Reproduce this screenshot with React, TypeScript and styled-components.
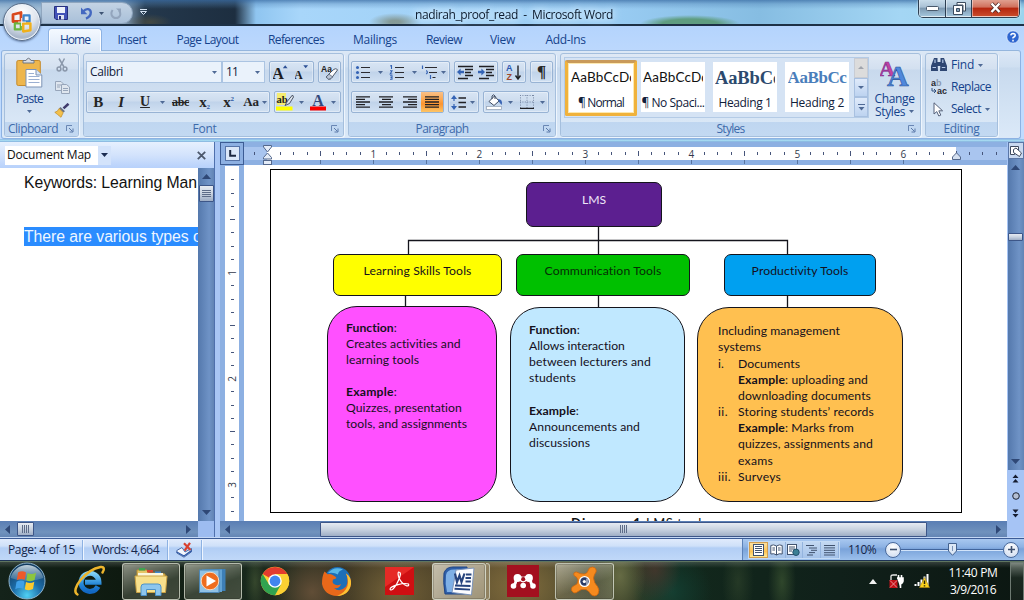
import React, { ReactNode, useLayoutEffect, useRef } from 'react';
import styled, { createGlobalStyle, css } from 'styled-components';

const Global = createGlobalStyle`
  *, *::before, *::after { box-sizing: border-box; }
  html, body { margin: 0; padding: 0; }
  body { width: 1024px; height: 600px; overflow: hidden; font-family: "Open Sans", "Noto Sans", sans-serif; font-size: 12px; color: #15428b; }
  svg { display: block; flex: none; }
`;

/* ---------- text fitted to a set advance width ---------- */

const Run = styled.span<{ $size?: number; $color?: string; $bold?: boolean; $font?: string; $lh?: number }>`
  display: inline-block;
  flex: none;
  white-space: pre;
  line-height: ${p => p.$lh ?? 16}px;
  ${p => p.$size && css`font-size: ${p.$size}px;`}
  ${p => p.$color && css`color: ${p.$color};`}
  ${p => p.$bold && css`font-weight: 700;`}
  ${p => p.$font && css`font-family: ${p.$font};`}
`;

type TextProps = { w: number; children: ReactNode; size?: number; color?: string; bold?: boolean; font?: string; lh?: number };

function Text({ w, children, size, color, bold, font, lh }: TextProps) {
  const ref = useRef<HTMLSpanElement>(null);
  useLayoutEffect(() => {
    const el = ref.current;
    if (!el) return;
    el.style.letterSpacing = '0px';
    const count = (el.textContent || '').length;
    const natural = el.getBoundingClientRect().width;
    el.style.letterSpacing = `${(w - natural) / count}px`;
  }, [w]);
  return <Run ref={ref} $size={size} $color={color} $bold={bold} $font={font} $lh={lh}>{children}</Run>;
}

const LATO = 'Lato, sans-serif';
const ARIAL = '"Liberation Sans", sans-serif';
const SERIF = '"Liberation Serif", serif';

/* ---------- window frame ---------- */

const Screen = styled.div`
  width: 1024px;
  height: 600px;
  display: flex;
  flex-direction: column;
  overflow: hidden;
  position: relative;
  background: #bfdbff;
`;

const TitleBar = styled.header`
  height: 26px;
  flex: none;
  display: flex;
  border-bottom: 2px solid #1d3146;
  background:
    linear-gradient(180deg, rgba(60,110,165,.75) 0, rgba(80,130,180,.35) 4px, transparent 9px),
    radial-gradient(ellipse 50px 9px at 690px 24px, #5f9d80 55%, transparent 100%),
    radial-gradient(ellipse 26px 9px at 395px 22px, rgba(120,130,110,.7) 20%, transparent 100%),
    radial-gradient(ellipse 22px 8px at 150px 22px, rgba(90,85,60,.6), transparent),
    linear-gradient(90deg, #a3bfd8 0, #9ab4cc 120px, #24384c 145px, #1d2e40 235px, #8fc5f0 256px, #a8d6fa 300px, #98cbf2 620px, #86bde2 760px, #a4d6f4 900px, #9bd4ee 1024px);
`;

const QuickAccess = styled.div`
  display: flex;
  align-items: center;
  gap: 6px;
  width: 92px;
  height: 22px;
  margin: 2px 0 0 41px;
  padding-left: 12px;
  border: 1px solid #8fa6bf;
  border-radius: 0 11px 11px 0;
  background: linear-gradient(#c3d3e4, #a9c0d9);
`;

const TitleLeft = styled.div`
  display: flex;
  align-items: center;
  gap: 7px;
  flex: 0 0 415px;
`;

const TitleText = styled.div`
  flex: 1;
  padding-top: 6px;
  filter: drop-shadow(0 0 4px #d9efff) drop-shadow(0 0 3px #d9efff);
`;

const WindowButtons = styled.div`
  display: flex;
  width: 102px;
  height: 18px;
  margin-right: 4px;
  border: 1px solid #2d3f52;
  border-top: 0;
  border-radius: 0 0 5px 5px;
  overflow: hidden;
  box-shadow: 0 0 2px #e4f6ff;
`;

const WindowButton = styled.div<{ $w: number; $close?: boolean }>`
  width: ${p => p.$w}px;
  display: flex;
  align-items: center;
  justify-content: center;
  border: 1px solid rgba(255,255,255,.45);
  border-top: 0;
  background: ${p => p.$close
    ? 'linear-gradient(#e0a090 0, #d0705c 45%, #b5250e 50%, #c84a2a 100%)'
    : 'linear-gradient(#c8dcea 0, #a8c0d4 45%, #7c98b0 50%, #a2c4da 100%)'};
  & + & { box-shadow: -1px 0 0 #2d3f52; }
`;

const OfficeButton = styled.div`
  position: absolute;
  left: 3px;
  top: 3px;
  z-index: 5;
  width: 38px;
  height: 38px;
  border-radius: 50%;
  border: 1px solid #5b6f8a;
  display: flex;
  align-items: center;
  justify-content: center;
  background: radial-gradient(circle at 50% 25%, #ffffff 0, #dfe5ee 45%, #a9b7cb 75%, #eef3fa 100%);
  box-shadow: inset 0 0 0 1px #eef4fb, 0 1px 2px rgba(20,40,80,.5);
`;

/* ---------- ribbon ---------- */

const TabRow = styled.nav`
  height: 24px;
  flex: none;
  display: flex;
  align-items: flex-end;
  padding-left: 48px;
  background: linear-gradient(#b4d4fd, #bcd8fd);
`;

const Tab = styled.div<{ $w: number; $active?: boolean }>`
  width: ${p => p.$w}px;
  height: 23px;
  padding-top: 4px;
  text-align: center;
  ${p => p.$active && css`
    position: relative;
    padding-top: 2px;
    margin-bottom: -1px;
    border: 1px solid #8db2e3;
    border-bottom: 0;
    border-radius: 4px 4px 0 0;
    background: linear-gradient(#f4f9ff, #e6effb 60%, #dbe7f6);
    box-shadow: inset 1px 0 0 #fff, inset -1px 0 0 #fff;
  `}
`;

const HelpSlot = styled.div`
  margin-left: auto;
  padding: 0 4px 6px 0;
`;

const Ribbon = styled.section`
  height: 89px;
  flex: none;
  display: flex;
  gap: 4px;
  margin: 0 3px 0 1px;
  padding: 2px 3px 2px 2px;
  border: 1px solid #8db2e3;
  border-top-color: #95b6dd;
  border-radius: 3px;
  background: linear-gradient(#dce8f6 0, #cfdff1 16px, #c8daee 17px, #dbe9f8 100%);
`;

const RibbonEdge = styled.div`
  height: 3px;
  flex: none;
  background: linear-gradient(#8db9e4, #a9dff3 60%, #7ba4d8);
`;

const GroupBox = styled.div<{ $w: number }>`
  width: ${p => p.$w}px;
  height: 84px;
  flex: none;
  display: flex;
  flex-direction: column;
  border: 1px solid #a5bfdd;
  border-radius: 3px;
  overflow: hidden;
  background: linear-gradient(#dfe9f5 0, #d3e0f0 15px, #c8d9ed 16px, #d9e7f6 68px);
  box-shadow: 1px 1px 0 #eef5fd;
`;

const GroupBody = styled.div`
  height: 68px;
  display: flex;
  overflow: hidden;
`;

const GroupLabel = styled.div`
  height: 14px;
  position: relative;
  display: flex;
  justify-content: center;
  align-items: center;
  background: linear-gradient(#bfd6f0, #c3d9f2);
  color: #3e6aaa;
`;

const LabelSpacer = styled.div<{ $w: number }>`width: ${p => p.$w}px; flex: none;`;

function Launcher() {
  return (
    <svg width="8" height="8" viewBox="0 0 8 8">
      <path d="M0.5 6V0.5H6" fill="none" stroke="#6a87b4" />
      <path d="M3 3l3.5 3.5M7 3.5V7H3.5" fill="none" stroke="#5b79a8" />
    </svg>
  );
}

const LauncherSlot = styled.div`
  position: absolute;
  right: 4px;
  top: 3px;
`;

function Group({ w, label, lw, shift = 0, launcher = true, children }: { w: number; label: string; lw: number; shift?: number; launcher?: boolean; children: ReactNode }) {
  return (
    <GroupBox $w={w}>
      <GroupBody>{children}</GroupBody>
      <GroupLabel>
        <Text w={lw} lh={14}>{label}</Text>
        {shift > 0 && <LabelSpacer $w={shift} />}
        {launcher && <LauncherSlot><Launcher /></LauncherSlot>}
      </GroupLabel>
    </GroupBox>
  );
}

const Rows = styled.div`
  display: flex;
  flex-direction: column;
  gap: 8px;
  padding: 7px 0 0 2px;
`;

const Row = styled.div<{ $gap?: number }>`
  display: flex;
  height: 22px;
  gap: ${p => p.$gap ?? 4}px;
`;

const Cluster = styled.div<{ $w: number }>`
  width: ${p => p.$w}px;
  height: 22px;
  display: flex;
  align-items: center;
  border: 1px solid #98b3d4;
  border-radius: 2px;
  background: linear-gradient(#d8e5f4 0, #cddcee 45%, #c0d3ea 50%, #d0e0f2 100%);
  box-shadow: inset 0 0 0 1px rgba(255,255,255,.35);
`;

const Tool = styled.div<{ $w: number; $on?: boolean }>`
  width: ${p => p.$w}px;
  height: 20px;
  flex: none;
  display: flex;
  align-items: center;
  justify-content: center;
  color: #222;
  ${p => p.$on && css`background: linear-gradient(#f8c088, #fda64b 40%, #fb9430 60%, #fdc566);`}
`;

const Combo = styled.div<{ $w: number }>`
  width: ${p => p.$w}px;
  height: 22px;
  display: flex;
  align-items: center;
  justify-content: space-between;
  padding: 0 4px 0 3px;
  border: 1px solid #abc4e2;
  background: #eaf2fb;
  color: #10203a;
`;

const Arrow = ({ c = '#4f6a96', s = 5 }: { c?: string; s?: number }) => (
  <svg width={s} height="3" viewBox="0 0 5 3"><path d="M0 0H5L2.5 3Z" fill={c} /></svg>
);

const Glyph = styled.span<{ $size: number; $italic?: boolean; $under?: boolean; $strike?: boolean; $c?: string }>`
  font: ${p => (p.$italic ? 'italic ' : '')}700 ${p => p.$size}px/18px "Liberation Serif", serif;
  text-decoration: ${p => (p.$under ? 'underline' : p.$strike ? 'line-through' : 'none')};
  color: ${p => p.$c ?? '#262626'};
  letter-spacing: -0.3px;
  sup, sub { font-size: 7px; line-height: 0; color: #2c56a0; }
  sup { vertical-align: 6px; }
  sub { vertical-align: -2px; }
`;

const PasteColumn = styled.div`
  width: 46px;
  display: flex;
  flex-direction: column;
  align-items: center;
  padding: 3px 0 0 3px;
`;

const SmallColumn = styled.div`
  width: 22px;
  display: flex;
  flex-direction: column;
  align-items: center;
  gap: 9px;
  padding: 4px 0 0 0;
`;

const Gallery = styled.div`
  display: flex;
  width: 306px;
  height: 61px;
  margin: 3px 0 0 3px;
  border: 1px solid #b4cbe6;
  background: #d5e3f4;
`;

const StyleTile = styled.div<{ $w: number; $on?: boolean; $ml?: number }>`
  width: ${p => p.$w}px;
  height: ${p => (p.$on ? 56 : 50)}px;
  margin: ${p => (p.$on ? 2 : 4)}px 0 0 ${p => p.$ml ?? 0}px;
  flex: none;
  overflow: hidden;
  background: #fff;
  display: flex;
  flex-direction: column;
  align-items: center;
  justify-content: space-between;
  padding: ${p => (p.$on ? '6px 3px 2px' : '7px 0 1px')};
  color: #10203a;
  ${p => p.$on && css`border: 3px solid #f0b23c; border-top-color: #c99a5a; border-radius: 2px; box-shadow: inset 0 0 0 1px #fde9b0;`}
`;

const Sample = styled.div<{ $cut?: number }>`
  width: ${p => (p.$cut ? `${p.$cut}px` : 'auto')};
  max-width: 100%;
  overflow: hidden;
  display: flex;
`;

const GalleryScroll = styled.div`
  margin-left: auto;
  width: 14px;
  display: flex;
  flex-direction: column;
  div {
    flex: 1;
    display: flex;
    align-items: center;
    justify-content: center;
    border: 1px solid #a8c0e0;
    background: linear-gradient(#dfeafa, #bdd3f0);
  }
  div:first-child { background: #dcdcdc; border-color: #c8ccd4; }
`;

const ChangeStyles = styled.div`
  width: 51px;
  display: flex;
  flex-direction: column;
  align-items: center;
  padding-top: 4px;
`;

const Inline = styled.div<{ $gap?: number }>`
  display: flex;
  align-items: center;
  gap: ${p => p.$gap ?? 4}px;
`;

const EditList = styled.div`
  display: flex;
  flex-direction: column;
  gap: 6px;
  padding: 3px 0 0 5px;
`;

/* ---------- workspace ---------- */

const Workspace = styled.main`
  height: 396px;
  flex: none;
  display: flex;
  background: #a3c0ee;
  border-bottom: 1px solid #c4d8f6;
`;

const MapPane = styled.aside`
  width: 214px;
  flex: none;
  display: flex;
  flex-direction: column;
`;

const MapHeader = styled.div`
  height: 26px;
  flex: none;
  display: flex;
  align-items: center;
  justify-content: space-between;
  padding: 0 8px 0 5px;
  background: linear-gradient(#e6f0fe, #d3e3fc 50%, #b7d1fb);
`;

const MapSelector = styled.div`
  width: 106px;
  height: 19px;
  display: flex;
  align-items: center;
  padding-left: 2px;
  background: #fff;
`;

const SelectorArrow = styled.div`
  width: 13px;
  height: 19px;
  margin-left: auto;
  display: flex;
  align-items: center;
  justify-content: center;
  background: #d3e3fb;
`;

const MapBody = styled.div`
  flex: 1;
  display: flex;
`;

const MapText = styled.div`
  width: 198px;
  overflow: hidden;
  padding: 5px 0 0 24px;
  background: #fff;
  display: flex;
  flex-direction: column;
  align-items: flex-start;
  gap: 35px;
`;

const Highlight = styled.div`
  height: 19px;
  background: #2a8cff;
`;

const VTrack = styled.div<{ $w: number }>`
  width: ${p => p.$w}px;
  flex: none;
  display: flex;
  flex-direction: column;
  align-items: center;
  background: linear-gradient(90deg, #5478ac, #6f93c6 70%, #6284b5);
`;

const HTrack = styled.div`
  flex: 1;
  display: flex;
  align-items: center;
  background: linear-gradient(#5a7eb4, #7092bd 70%, #6385b4);
`;

const Gap = styled.div<{ $s: number }>`flex: 0 0 ${p => p.$s}px;`;

const Thumb = styled.div<{ $w: number; $h: number }>`
  width: ${p => p.$w}px;
  height: ${p => p.$h}px;
  flex: none;
  display: flex;
  align-items: center;
  justify-content: center;
  border: 1px solid #3d5688;
  border-radius: 1px;
  background: linear-gradient(#e6ebf2, #c8d2e0 50%, #9faec6);
`;

const ScrollRow = styled.div`
  height: 16px;
  flex: none;
  display: flex;
`;

const Corner = styled.div<{ $w: number }>`width: ${p => p.$w}px; background: #9dbcf0;`;

const Splitter = styled.div`
  width: 6px;
  flex: none;
  border-left: 1px solid #4f70ad;
  background: #a9c6f5;
`;

const Editor = styled.div`
  width: 787px;
  flex: none;
  display: flex;
  flex-direction: column;
`;

const RulerRow = styled.div`
  height: 23px;
  flex: none;
  display: flex;
  background: #8db0e2;
`;

const TabSelector = styled.div`
  width: 24px;
  height: 23px;
  border: 1px solid #3c5c94;
  display: flex;
  align-items: center;
  justify-content: center;
  background: #8db0e2;
  span {
    width: 15px;
    height: 15px;
    background: #dbe7f8;
    border: 1px solid #5674a8;
    display: flex;
    align-items: center;
    justify-content: center;
  }
`;

const HRuler = styled.div`
  width: 763px;
  padding-top: 5px;
  position: relative;
`;

const RulerStrip = styled.div`
  height: 13px;
  display: flex;
  overflow: hidden;
  padding-left: 3.6px;
  background: linear-gradient(90deg, #a9c5ef 0 23px, #fff 23px 712px, #a9c5ef 712px);
`;

const Mark = styled.div<{ $vertical?: boolean }>`
  ${p => p.$vertical ? 'height' : 'width'}: 13.25px;
  ${p => p.$vertical ? 'width: 14px' : 'height: 13px'};
  flex: none;
  display: flex;
  align-items: center;
  justify-content: center;
  color: #333a4c;
  font: 10px/12px "Open Sans", sans-serif;
  i { background: #46557a; }
  span { ${p => p.$vertical && 'transform: rotate(-90deg);'} }
`;

const Tick = styled.i<{ $w: number; $h: number }>`
  width: ${p => p.$w}px;
  height: ${p => p.$h}px;
`;

const TabStops = styled.div`
  height: 5px;
  display: flex;
  padding-left: 24px;
  div { width: 53px; border-right: 1px solid #58749f; height: 4px; }
`;

const IndentMarker = styled.div<{ $x: number; $y: number }>`
  position: absolute;
  left: ${p => p.$x}px;
  top: ${p => p.$y}px;
`;

const PageArea = styled.div`
  flex: 1;
  display: flex;
  min-height: 0;
`;

const VRuler = styled.div`
  width: 24px;
  flex: none;
  padding: 1px 5px 0 5px;
  background: #8db0e2;
`;

const VRulerStrip = styled.div`
  height: 100%;
  overflow: hidden;
  display: flex;
  flex-direction: column;
  padding-top: 7.2px;
  background: #fff;
`;

const Page = styled.div`
  width: 763px;
  position: relative;
  overflow: hidden;
  background: #fff;
`;

/* the drawing canvas of the document; shapes sit at free positions on it */

const Frame = styled.div`
  width: 692px;
  height: 344px;
  margin: 4px 0 0 26px;
  position: relative;
  border: 1.4px solid #000;
`;

const Shape = styled.div<{ $x: number; $y: number; $w: number; $h: number; $fill: string; $r: number; $pl?: number; $pt?: number }>`
  position: absolute;
  left: ${p => p.$x - 271}px;
  top: ${p => p.$y - 170}px;
  width: ${p => p.$w}px;
  height: ${p => p.$h}px;
  border: 1.4px solid #14141c;
  border-radius: ${p => p.$r}px;
  background: ${p => p.$fill};
  padding: ${p => p.$pt ?? 8}px 0 0 ${p => p.$pl ?? 0}px;
  color: #15101c;
  font-family: Lato, sans-serif;
  font-size: 12.2px;
  display: flex;
  flex-direction: column;
  align-items: ${p => (p.$pl ? 'flex-start' : 'center')};
`;

const Wires = styled.svg`
  position: absolute;
  left: -1px;
  top: -1px;
`;

const Blank = styled.div<{ $h: number }>`height: ${p => p.$h}px; flex: none;`;

const ListRow = styled.div`
  display: grid;
  grid-template-columns: 20px auto;
  justify-items: start;
  height: 16.1px;
`;

const Caption = styled.div`
  display: flex;
  gap: 4px;
  padding: 1px 0 0 327px;
`;

const RightRail = styled.div`
  width: 17px;
  flex: none;
  display: flex;
  flex-direction: column;
  align-items: center;
  background: #a6c4f5;
`;

const RulerToggle = styled.div`
  width: 16px;
  height: 17px;
  flex: none;
  display: flex;
  align-items: center;
  justify-content: center;
  border: 1px solid #5a76a6;
  background: #c9d9f0;
`;

const BrowseButtons = styled.div`
  flex: 1;
  width: 17px;
  display: flex;
  flex-direction: column;
  align-items: center;
  padding-top: 4px;
  gap: 9px;
`;

/* ---------- status bar ---------- */

const StatusBar = styled.footer`
  height: 23px;
  flex: none;
  display: flex;
  align-items: center;
  border-top: 1px solid #3b5b96;
  border-bottom: 1px solid #1d3354;
  background: linear-gradient(#e0ebfc 0, #cfe0f9 7px, #b2cef5 9px, #c0d8f8 100%);
  color: #15264a;
`;

const StatusCell = styled.div<{ $w: number; $pl: number }>`
  width: ${p => p.$w}px;
  height: 20px;
  flex: none;
  display: flex;
  align-items: center;
  padding-left: ${p => p.$pl}px;
  border-right: 1px solid #8db2e3;
  box-shadow: 1px 0 0 #eef5ff;
`;

const StatusRight = styled.div`
  margin-left: auto;
  width: 282px;
  height: 21px;
  display: flex;
  align-items: center;
  padding-left: 5px;
  border-left: 1px solid #5d82b8;
  background: linear-gradient(#a9c8f0 0, #8db2e4 8px, #7aa3da 10px, #9cc0ec 100%);
`;

const Views = styled.div`
  width: 92px;
  height: 18px;
  display: flex;
  border: 1px solid #c5dbf5;
  background: linear-gradient(#c3d8f2, #a5c3ea);
`;

const View = styled.div<{ $on?: boolean }>`
  flex: 1;
  display: flex;
  align-items: center;
  justify-content: center;
  border-right: 1px solid #94b4de;
  ${p => p.$on && css`background: linear-gradient(#fbe0a0, #fdc252 60%, #fdea98); border: 1px solid #d29e50;`}
`;

const Knob = styled.div`
  width: 16px;
  height: 16px;
  flex: none;
  border-radius: 50%;
  border: 1px solid #4a6a9c;
  background: radial-gradient(circle at 50% 30%, #fff, #c9d8ee);
  display: flex;
  align-items: center;
  justify-content: center;
`;

const SliderLine = styled.div`
  width: 102px;
  height: 15px;
  display: flex;
  justify-content: center;
  align-items: center;
  background: linear-gradient(transparent 7px, #41649c 7px 8px, #d2e4fa 8px 9px, transparent 9px);
`;

/* ---------- taskbar ---------- */

const Taskbar = styled.div`
  height: 39px;
  flex: none;
  display: flex;
  align-items: center;
  border-top: 1px solid #5f7560;
  background:
    linear-gradient(180deg, rgba(255,255,255,.16), transparent 6px),
    radial-gradient(ellipse 10px 30px at 255px 20px, rgba(80,100,60,.5), transparent),
    radial-gradient(ellipse 40px 40px at 312px 30px, rgba(110,85,60,.8), transparent),
    radial-gradient(ellipse 60px 50px at 395px 30px, rgba(125,105,60,.85), transparent),
    radial-gradient(ellipse 70px 50px at 520px 25px, rgba(130,110,62,.95), transparent),
    radial-gradient(ellipse 26px 40px at 620px 14px, rgba(120,125,80,.7), transparent),
    radial-gradient(ellipse 26px 30px at 655px 8px, rgba(78,54,46,.7), transparent),
    radial-gradient(ellipse 14px 40px at 782px 20px, rgba(60,85,50,.7), transparent),
    radial-gradient(ellipse 16px 40px at 738px 20px, rgba(50,70,45,.6), transparent),
    radial-gradient(ellipse 40px 40px at 672px 30px, rgba(20,75,62,.6), transparent),
    linear-gradient(90deg, #14231a, #0e1a10 120px, #18281c 250px, #3a3422 350px, #57492c 500px, #3b4128 620px, #12281c 680px, #10201a 840px, #0c1712 1024px);
`;

const TaskItem = styled.div<{ $w: number; $ml?: number; $run?: boolean; $active?: boolean }>`
  width: ${p => p.$w}px;
  height: 37px;
  margin-left: ${p => p.$ml ?? 0}px;
  flex: none;
  display: flex;
  align-items: center;
  justify-content: center;
  ${p => (p.$run || p.$active) && css`
    border: 1px solid rgba(215,220,205,.75);
    border-radius: 3px;
    background: ${p.$active
      ? 'linear-gradient(135deg, rgba(235,230,215,.75), rgba(195,188,165,.6))'
      : 'linear-gradient(160deg, rgba(225,225,210,.6), rgba(130,135,115,.35) 60%, rgba(150,150,130,.35))'};
    box-shadow: inset 0 0 0 1px rgba(30,30,20,.2);
  `}
`;

const StackEdge = styled.div`
  width: 4px;
  height: 37px;
  border: 1px solid rgba(215,220,205,.7);
  border-left: 0;
  border-radius: 0 3px 3px 0;
  background: rgba(190,180,150,.45);
`;

const Tray = styled.div`
  margin-left: auto;
  display: flex;
  align-items: center;
`;

const Clock = styled.div`
  width: 60px;
  display: flex;
  flex-direction: column;
  align-items: center;
  color: #fff;
  margin-right: 7px;
`;

const ShowDesktop = styled.div`
  width: 14px;
  height: 39px;
  border: 1px solid #6e7a72;
  background: linear-gradient(rgba(190,200,190,.55), rgba(40,55,45,.5) 40%, rgba(30,40,34,.6));
`;

/* ---------- drawings ---------- */

const OfficeLogo = () => (
  <svg width="24" height="24" viewBox="0 0 24 24" fill="none" strokeLinejoin="round">
    <path d="M3 4.5L11 2.5V11.5H3Z" stroke="#d9481c" strokeWidth="2.8" />
    <rect x="13.6" y="5.4" width="6" height="6" stroke="#3e86cc" strokeWidth="2.2" />
    <rect x="4.8" y="13.4" width="6" height="6" stroke="#6ab43c" strokeWidth="2.2" />
    <path d="M13.2 13.4H20.4V20.2L13.2 21.4Z" stroke="#f0b01c" strokeWidth="2.5" />
    <path d="M11.5 8v8M8 12h8" stroke="#fff" strokeWidth=".8" />
  </svg>
);

const SaveIcon = () => (
  <svg width="14" height="14" viewBox="0 0 14 14">
    <path d="M.5.5H13.5V13.5H2L.5 12Z" fill="#4453b8" stroke="#27307f" />
    <rect x="3" y="1" width="8" height="6" fill="#eef2fb" /><rect x="4" y="9" width="6" height="4.5" fill="#dfe4f2" /><rect x="5" y="10" width="2" height="3.5" fill="#27307f" />
  </svg>
);
const UndoIcon = () => (
  <svg width="12" height="14" viewBox="0 0 12 14"><path d="M2.5 5.2C5 2 9.7 2.5 9.8 6.5C9.8 9.5 7.5 11.5 5 12.6" fill="none" stroke="#4468c0" strokeWidth="2.4" /><path d="M0 1.5V8.3H6.3Z" fill="#4468c0" /></svg>
);
const RedoIcon = () => (
  <svg width="12" height="13" viewBox="0 0 12 13"><path d="M2.6 3C0 7 2 11 6 11C10 11 11.6 7 9 3.4" fill="none" stroke="#93a5bd" strokeWidth="2" /><path d="M6 1.5H11V6Z" fill="#93a5bd" /></svg>
);

const PasteIcon = () => (
  <svg width="27" height="31" viewBox="0 0 27 31">
    <rect x=".8" y="3.5" width="23.5" height="25" rx="1.5" fill="#eeb64c" stroke="#c58a2c" />
    <path d="M7 6V3.5H10Q12.5-1 15 3.5H18V6Z" fill="#d9dde4" stroke="#6c7684" />
    <path d="M10 12.5H20L25.8 18V30H10Z" fill="#fff" stroke="#7d93b5" />
    <path d="M20 12.5V18H25.8" fill="#dce7f6" stroke="#7d93b5" />
    <path d="M12.5 16.5H18M12.5 19.5H23.5M12.5 22.5H23.5M12.5 25.5H23.5" stroke="#9bb0d2" />
  </svg>
);
const CutIcon = () => (
  <svg width="12" height="14" viewBox="0 0 12 14" fill="none" stroke="#8b98ab" strokeWidth="1.5"><path d="M3 .5L8 9M8.5.5L4 9" /><circle cx="3" cy="11" r="1.9" /><circle cx="9" cy="11" r="1.9" /></svg>
);
const CopyIcon = () => (
  <svg width="15" height="13" viewBox="0 0 15 13" fill="#dfe6ef" stroke="#97a5ba"><path d="M.5.5H6L8.5 3V9.5H.5Z" /><path d="M6.5 3.5H11.5L14.5 6V12.5H6.5Z" /><path d="M8 7.5H13M8 9.5H13M2 4H6M2 6H5" /></svg>
);
const PainterIcon = () => (
  <svg width="16" height="15" viewBox="0 0 16 15"><path d="M14.5.8L9.5 5.4" stroke="#3f3a6c" strokeWidth="2.6" /><path d="M6.5 4L11 8.2L9.2 9.6L5 5.5Z" fill="#6a7080" /><path d="M5 5.5L9.2 9.6L7 14.3Q3 11 .8 9.3Q4 8.8 5 5.5Z" fill="#f3c04c" stroke="#c08a24" strokeWidth=".7" /></svg>
);

const EraserIcon = () => (
  <svg width="19" height="17" viewBox="0 0 19 17"><text x="1" y="8" fontSize="8.5" fontWeight="700" fontFamily="Liberation Sans, sans-serif" fill="#222">Aa</text><path d="M6 13L12 7Q16 3 17.5 6L11.5 14Q9 17 6 13Z" fill="#fdfdfe" stroke="#4b5668" /><path d="M6 13L9 10.2L12.6 12.8L11 14.6Q8.5 16.4 6 13Z" fill="#b9c4d6" stroke="#4b5668" strokeWidth=".7" /></svg>
);
const GrowIcon = ({ up }: { up?: boolean }) => (
  <svg width="16" height="17" viewBox="0 0 16 17"><text x="-1" y="14.5" fontSize={up ? 16.5 : 12} fontWeight="700" fontFamily="Liberation Serif, serif" fill="#1d1d22">A</text>{up ? <path d="M9.8 4.3L12.2 1.3L14.6 4.3Z" fill="#2c4f94" /> : <path d="M8.3 1.3H13.1L10.7 4.3Z" fill="#2c4f94" />}</svg>
);
const HighlighterIcon = () => (
  <svg width="18" height="18" viewBox="0 0 18 18"><rect x="0" y="13.5" width="16.5" height="4" fill="#ffff00" /><rect x="1" y="0" width="9" height="12" fill="#f5ec70" /><text x=".5" y="10" fontSize="10.5" fontFamily="Liberation Serif, serif" fill="#1c1c1c" fontWeight="700">ab</text><path d="M16.5 2L11.5 8L9 12.5L13.5 10.5L17.5 4Z" fill="#dfe5ee" stroke="#3c4656" strokeWidth=".9" /></svg>
);
const FontColorIcon = () => (
  <svg width="18" height="18" viewBox="0 0 18 18"><rect x="1" y="13.5" width="16" height="4" fill="#fb0000" /><text x="3.2" y="12.5" fontSize="16" fontWeight="700" fontFamily="Liberation Serif, serif" fill="#33487c">A</text></svg>
);

const BulletIcon = ({ kind }: { kind: 'dot' | 'num' | 'multi' }) => (
  <svg width="17" height="15" viewBox="0 0 17 15" stroke="#2b2b30" strokeWidth="1.1">
    {kind === 'multi' ? (
      <g><path d="M4 2.5H16M8 7.5H16M11.5 12.5H14.5" /><g fill="none" stroke="#3463b4" strokeWidth="1.2"><path d="M1.5.5V4M5.2 5.5Q7.5 7 5.2 9M9.5 10V14" /></g></g>
    ) : (
      <g><path d="M6 2.5H15M6 7.5H15M6 12.5H15" />
        {kind === 'dot'
          ? <g fill="#3463b4" stroke="none"><circle cx="2.5" cy="2.5" r="1.5" /><circle cx="2.5" cy="7.5" r="1.5" /><circle cx="2.5" cy="12.5" r="1.5" /></g>
          : <g fill="none" stroke="#3463b4" strokeWidth="1.1"><path d="M1.2 1L2.5.5V4M1 5.8H3L1.2 9H3.4M1 10.8H3V14.2H1M1.5 12.5H3" /></g>}
      </g>
    )}
  </svg>
);
const IndentIcon = ({ out }: { out?: boolean }) => (
  <svg width="17" height="15" viewBox="0 0 17 15"><path d="M1 1.5H16M8 4.5H16M8 7.5H14M8 10.5H16M1 13.5H11" stroke="#202024" strokeWidth="1.7" />{out ? <path d="M0 7L3.6 3.6V5.8H7V8.2H3.6V10.4Z" fill="#3463b4" /> : <path d="M7 7L3.4 3.6V5.8H0V8.2H3.4V10.4Z" fill="#3463b4" />}</svg>
);
const SortIcon = () => (
  <svg width="16" height="17" viewBox="0 0 16 17"><text x="0" y="7.4" fontSize="9" fontWeight="700" fontFamily="Liberation Sans, sans-serif" fill="#2c58b0">A</text><text x=".4" y="16" fontSize="9" fontWeight="700" fontFamily="Liberation Sans, sans-serif" fill="#a0482c">Z</text><path d="M12 1.5V14M9.5 11.5L12 15L14.5 11.5" stroke="#202024" strokeWidth="1.4" fill="none" /></svg>
);
const AlignIcon = ({ a }: { a: 'l' | 'c' | 'r' | 'j' }) => {
  const short = { l: [0, 9], c: [3, 12], r: [5, 14], j: [0, 14] }[a];
  const last = { l: [0, 10], c: [3, 12], r: [5, 14], j: [0, 14] }[a];
  return <svg width="14" height="13" viewBox="0 0 14 13" stroke="#202024" strokeWidth="1.3"><path d={`M0 .8H14M${short[0]} 3.4H${short[1]}M0 6H14M${short[0]} 8.6H${short[1]}M0 11.2H${a === 'l' ? 14 : 14}M${last[0]} 12.4H${last[0]}`} /></svg>;
};
const SpacingIcon = () => (
  <svg width="15" height="15" viewBox="0 0 15 15"><path d="M7.5 3H15M7.5 7.5H15M7.5 12H15" stroke="#202024" strokeWidth="1.4" /><path d="M3 0L6 4H0ZM3 15L0 11H6ZM2.4 3.5H3.6V6H2.4ZM2.4 9H3.6V11.5H2.4Z" fill="#3463b4" /></svg>
);
const BucketIcon = () => (
  <svg width="17" height="16" viewBox="0 0 17 16"><rect x=".5" y="12.5" width="15" height="3" fill="#fff" stroke="#9aa7ba" strokeWidth=".8" /><path d="M3 7.5L8.5 2L13 7L8 11.5Z" fill="#fff" stroke="#3e4a60" /><path d="M6 5V2Q7.5-.5 9 2V5" fill="none" stroke="#3e4a60" /><path d="M12 5Q17 5 15.8 11Q13.5 9 12.5 7Z" fill="#3b66b4" /></svg>
);
const BorderIcon = () => (
  <svg width="14" height="14" viewBox="0 0 14 14"><path d="M.5 0V14M7 0V14M13.5 0V14M0 .5H14M0 7H14" stroke="#7787a3" strokeDasharray="1 1.4" /><path d="M0 13.3H14" stroke="#202024" strokeWidth="1.3" /></svg>
);
const ChangeStylesIcon = () => (
  <svg width="30" height="30" viewBox="0 0 30 30" fontFamily="Liberation Serif, serif" fontWeight="700"><text x="-1" y="17.5" fontSize="22" fill="#c242a0" stroke="#7c2c92" strokeWidth=".6">A</text><text x="7" y="28" fontSize="30" fill="#4f88dc" stroke="#2a5098" strokeWidth=".6">A</text></svg>
);
const FindIcon = () => (
  <svg width="16" height="14" viewBox="0 0 16 14" fill="#2e4672"><path d="M3 0H6.5V4L7 13H0V8Z" /><path d="M9.5 0H13L16 8V13H9L9.5 4Z" /><rect x="6" y="4" width="4" height="4" /><path d="M1.5 9.5H5M10.8 9.5H14.3M4 1.5V5M11.8 1.5V5" stroke="#b6c9e8" strokeWidth="1.2" /></svg>
);
const ReplaceIcon = () => (
  <svg width="17" height="16" viewBox="0 0 17 16" fontFamily="Liberation Sans, sans-serif" fontWeight="700" fontSize="9"><text x="0" y="7" fill="#2a2a30">a</text><text x="5" y="7" fill="#8a98ae">b</text><text x="6" y="15" fill="#2a2a30">ac</text><path d="M1 9V12H4.5M3 10L5 12L3 14" fill="none" stroke="#33517f" /></svg>
);
const CursorIcon = () => (
  <svg width="16" height="15" viewBox="-2 0 16 15"><path d="M1 .8V12L3.8 9.6L5.8 14L7.8 13.1L5.8 8.8H9.6Z" fill="#fff" stroke="#55617a" /></svg>
);
const DownTri = ({ c = '#2f4876' }: { c?: string }) => <svg width="9" height="5" viewBox="0 0 9 5"><path d="M0 0H9L4.5 5Z" fill={c} /></svg>;
const UpTri = ({ c = '#2f4876' }: { c?: string }) => <svg width="9" height="5" viewBox="0 0 9 5"><path d="M0 5H9L4.5 0Z" fill={c} /></svg>;
const SmallTri = ({ up, c }: { up?: boolean; c: string }) => <svg width="6" height="3" viewBox="0 0 6 3"><path d={up ? 'M0 3H6L3 0Z' : 'M0 0H6L3 3Z'} fill={c} /></svg>;
const SideTri = ({ right }: { right?: boolean }) => <svg width="5" height="9" viewBox="0 0 5 9"><path d={right ? 'M0 0V9L5 4.5Z' : 'M5 0V9L0 4.5Z'} fill="#2f4876" /></svg>;
const Grip = ({ v }: { v?: boolean }) => <svg width="9" height="9" viewBox="0 0 9 9" stroke="#5d6c88"><path d={v ? 'M0 1.5H9M0 3.5H9M0 5.5H9M0 7.5H9' : 'M1.5 0V8M3.5 0V8M5.5 0V8M7.5 0V8'} /></svg>;
const DoubleTri = ({ up }: { up?: boolean }) => <svg width="7" height="9" viewBox="0 0 7 9" fill="#151c30"><path d={up ? 'M.5 4L3.5 .5L6.5 4ZM.5 8.5L3.5 5L6.5 8.5Z' : 'M.5 .5H6.5L3.5 4ZM.5 5H6.5L3.5 8.5Z'} /></svg>;

const ViewIcon = ({ n }: { n: number }) => (
  <svg width="13" height="12" viewBox="0 0 13 12" fill="none" stroke="#41536f">
    {n === 0 && <><rect x="1.5" y=".5" width="10" height="11" fill="#fff" /><path d="M3 2.5H10M3 4.5H10M3 6.5H10M3 8.5H10" /></>}
    {n === 1 && <><path d="M6.5 2Q3.5 0 .8 1.5V10Q4 9 6.5 11Q9 9 12.2 10V1.5Q9.5 0 6.5 2V11" fill="#fff" /><path d="M2.4 4H5M2.4 6H5M8 4H10.6M8 6H10.6" /></>}
    {n === 2 && <><rect x=".5" y=".5" width="9" height="10" fill="#fff" /><path d="M2 3H8M2 5H8M2 7H5" /><circle cx="9" cy="8.3" r="3.2" fill="#3c7f94" stroke="#23506c" /></>}
    {n === 3 && <path d="M1 1.5H9M4 4H12M6 6.3H12M4 8.6H10M2 11H8" />}
    {n === 4 && <path d="M1 1.5H12M1 3.9H12M1 6.3H12M1 8.7H12M1 11H12" />}
  </svg>
);
const ProofIcon = () => (
  <svg width="17" height="16" viewBox="0 0 17 16"><path d="M.8 8.5L6 5.5L9 10L15.5 6.5V9.8L8 15.2L.8 11Z" fill="#f4f7fc" stroke="#4a6aa6" /><path d="M.8 10L8 14L15.5 8.6" stroke="#2f5aa8" fill="none" strokeWidth="1.4" /><path d="M8 1.2L14.5 8M14 .8L8.6 8.6" stroke="#d8402f" strokeWidth="2.2" /></svg>
);

const StartOrb = () => (
  <svg width="38" height="38" viewBox="0 0 38 38">
    <defs>
      <radialGradient id="orb" cx=".5" cy=".9" r=".9"><stop offset="0" stopColor="#4fd0f4" /><stop offset=".45" stopColor="#1c6ca8" /><stop offset="1" stopColor="#113658" /></radialGradient>
      <linearGradient id="orbTop" x2="0" y2="1"><stop offset="0" stopColor="#e2ecf2" stopOpacity=".85" /><stop offset="1" stopColor="#9ab8cc" stopOpacity=".25" /></linearGradient>
    </defs>
    <circle cx="19" cy="19" r="18" fill="url(#orb)" stroke="#8fb4cc" />
    <path d="M2.5 16A17 17 0 0 1 35.5 16Q19 22 2.5 16Z" fill="url(#orbTop)" />
    <path d="M10 10.5Q14 8.2 18 10.5L16.8 17.8Q12.5 16 8.8 18.2Z" fill="#ee5a2a" />
    <path d="M19.5 11Q23.5 13.2 28 10.8L26.6 18Q22.5 20.2 18.3 18.2Z" fill="#8cc63e" />
    <path d="M8.5 19.8Q12.5 17.6 16.5 19.5L15.3 26.8Q11 25 7.3 27.2Z" fill="#3fa0e8" />
    <path d="M18 19.9Q22 22 26.3 19.7L25 27Q21 29.2 16.8 27.2Z" fill="#fcc92e" />
  </svg>
);
const IeIcon = () => (
  <svg width="34" height="32" viewBox="0 0 34 32">
    <defs><linearGradient id="ie" x2="0" y2="1"><stop offset="0" stopColor="#7fd0f6" /><stop offset=".6" stopColor="#2587d8" /><stop offset="1" stopColor="#1268c4" /></linearGradient></defs>
    <path d="M25 21.5A9 9 0 1 1 26 17.3H12" fill="none" stroke="url(#ie)" strokeWidth="5" />
    <path d="M4.500 29.500C-3.500 25 13 4.500 27.500 2C31 1.400 32 4 29.500 7.500" fill="none" stroke="#edb52c" strokeWidth="2.500" strokeLinecap="round" />
  </svg>
);
const FolderIcon = () => (
  <svg width="34" height="29" viewBox="0 0 34 29">
    <path d="M3 3H13L15 6H24L31 7V24H3Z" fill="#e7c667" stroke="#b58e34" />
    <rect x="5" y="1" width="6" height="2.5" fill="#3fa34e" /><rect x="13" y="3" width="6" height="2.5" fill="#d8452f" /><rect x="21" y="4.5" width="6" height="2.5" fill="#4086cf" />
    <path d="M4 6H29V11H4Z" fill="#fbf6dc" /><path d="M1 9H33L31.5 25.5H2.5Z" fill="#f7e08c" stroke="#caa244" />
    <path d="M7 28.5V20Q7 17 10 17H24Q27 17 27 20V28.5H21.5V22.5H12.5V28.5Z" fill="#8dc6ee" stroke="#4d92c8" />
  </svg>
);
const PlayerIcon = () => (
  <svg width="28" height="26" viewBox="0 0 28 26"><rect x="6" y="1" width="20.5" height="22" fill="#3d7fb6" /><rect x="3" y="1.5" width="20" height="22.5" fill="#63a3d4" /><rect x=".5" y="2" width="19.5" height="22.5" fill="#8fc2e6" stroke="#4d86b4" /><circle cx="11" cy="13" r="8.8" fill="#ee6c1e" stroke="#fbd8b8" /><path d="M7.5 7.5L17 13L7.5 18.5Z" fill="#fff" /></svg>
);
const ChromeIcon = () => (
  <svg width="30" height="30" viewBox="0 0 30 30"><circle cx="15" cy="15" r="14.2" fill="#fbd033" /><path d="M15 15L2.7 8A14.2 14.2 0 0 1 27.3 8H15Z" fill="#e33b2e" /><path d="M15 8.2H27.5A14.2 14.2 0 0 1 15 29.2L21 18.5Z" fill="#fbd033" /><path d="M2.7 7.9A14.2 14.2 0 0 0 15 29.2L20.8 18.8L9.2 18.8Z" fill="#31a350" /><circle cx="15" cy="15" r="6.8" fill="#fff" /><circle cx="15" cy="15" r="5.4" fill="#4285ee" /></svg>
);
const FirefoxIcon = () => (
  <svg width="31" height="31" viewBox="0 0 31 31">
    <circle cx="16.5" cy="14" r="13" fill="#1d6fb8" /><path d="M7 7Q13 0 22 3.5Q17 5 17 8.5Q13 6 7 7Z" fill="#59b8e8" />
    <path d="M3.5 5.5Q5 6.5 6.5 8.3Q10 7.2 12.5 9.5Q15 10.5 15.5 12Q14 13.2 12 13.6Q11 15.5 12.5 17.8Q16 20.5 20 18Q18 23.5 13 22Q19 27 25 20.5Q28 15 25 7.5Q30.5 11 30 18Q28 29.5 16 30Q3.5 29.5 1 18Q.8 10.5 3.5 5.5Z" fill="#e8681a" />
    <path d="M25 7.5Q30.5 11 30 18Q28 29.5 16 30Q24 27 26.5 20Q28 13 25 7.5Z" fill="#fbc334" />
  </svg>
);
const AdobeIcon = () => (
  <svg width="29" height="28" viewBox="0 0 29 28"><rect width="29" height="28" fill="#cf0f12" /><path d="M0 0H29L0 20Z" fill="#e62a26" /><path d="M13.5 5Q16.5 5 14.8 10Q12 18 8 22Q5.5 24 5 22Q5.5 19.5 13 17.6Q20 15.8 23.5 17Q24.5 19 21.5 18.8Q16.5 16.5 14 11Q12.5 6.5 13.5 5Z" fill="none" stroke="#fff" strokeWidth="1.2" /></svg>
);
const WordIcon = () => (
  <svg width="32" height="30" viewBox="0 0 32 30"><path d="M1 7Q3 1 10 1H24V28H2Q0 16 1 7Z" fill="#2e5ea8" stroke="#1f4484" /><path d="M3 9Q4 3.5 11 3.5H15L11 26H4Q2 18 3 9Z" fill="#7fb0e6" /><path d="M13 4L31 2L28.5 29L9 26.5Z" fill="#fbfcff" stroke="#7c94ba" /><path d="M23 8.5H28.5M22.5 12H28M22.5 15.5H27.8M12 19.5L27.5 20M11.5 22.8L27 23.6" stroke="#26447e" strokeWidth="1.9" /><path d="M12 7.5L14 16L16.5 9.5L18.5 16L21.5 7.5" stroke="#26447e" strokeWidth="2.2" fill="none" /></svg>
);
const MendeleyIcon = () => (
  <svg width="32" height="32" viewBox="0 0 32 32"><rect width="32" height="32" fill="#a3101f" /><g fill="#fff"><circle cx="10.5" cy="13" r="3.9" /><circle cx="22" cy="13" r="3.9" /><circle cx="6.5" cy="21" r="2.8" /><circle cx="16.2" cy="20.5" r="2.8" /><circle cx="26" cy="21" r="2.8" /></g><path d="M9 12Q9.5 18 6.5 21M10.5 10.5Q16 16 22 10.5M23.5 12Q23 18 26 21M13 14Q16 18 19.5 14" stroke="#fff" strokeWidth="2.8" fill="none" /><circle cx="16.2" cy="14.2" r="2.1" fill="#a3101f" /></svg>
);
const AvastIcon = () => (
  <svg width="30" height="31" viewBox="0 0 30 31"><path d="M18 5Q18.5 1 22.5 1Q27 2 26 6Q24 8.5 23.5 12Q24 17 27.5 20.5Q30 24 28 28Q25 31.5 21 28.5Q19 25 16 23.5Q11 22.5 8 25.5Q4.5 28.5 1.8 25Q.5 21 4.5 19.5Q8 18.5 8 14Q7 10.5 4 9.5Q3 6 6.5 6Q11 8.5 14.5 8Q17 7.5 18 5Z" fill="#f58a1e" stroke="#d0660c" strokeWidth=".8" /><circle cx="14.5" cy="15.5" r="5.5" fill="#fff" /><circle cx="14.5" cy="15.5" r="4.2" fill="#2b3b66" /><circle cx="14.3" cy="15.5" r="1.6" fill="#fff" /><path d="M17 12.5V19" stroke="#fff" strokeWidth="1" /></svg>
);
const PowerIcon = () => (
  <svg width="17" height="15" viewBox="0 0 17 15"><path d="M3 12V2Q3 1 5 1H9" fill="none" stroke="#e8e8e8" strokeWidth="1.3" /><path d="M9 4H15V7Q14.5 9.5 12.5 9.5V14M10.5 1V4M13.5 1V4" stroke="#fff" strokeWidth="1.6" fill="#fff" /><rect x="1.5" y="6" width="8" height="8" fill="#c40e16" /><path d="M2 6.5L9 13.5M9 6.5L2 13.5" stroke="#fff" strokeWidth="1" opacity=".55" /></svg>
);
const SignalIcon = () => (
  <svg width="16" height="14" viewBox="0 0 16 14"><path d="M1.5 12V10M4.5 12V8M7.5 12V5.5M10.5 12V2.5M13.5 12V0" stroke="#fff" strokeWidth="2" /><path d="M10.5 3.5L15.5 13.5H5.5Z" fill="#fbd31e" stroke="#b08a10" strokeWidth=".6" /><path d="M10.5 6.5V10M10.5 11.3V12.5" stroke="#2a2208" strokeWidth="1.5" /></svg>
);

/* ---------- page content ---------- */

const tabs: [string, number, number][] = [
  ['Insert', 29, 60], ['Page Layout', 62, 91], ['References', 56, 86], ['Mailings', 44, 72], ['Review', 36, 66], ['View', 25, 51], ['Add-Ins', 40, 75],
];

const marks = (n: number, from = 0, last = 99) => Array.from({ length: n }, (_, i) => i + from).map(i => ({
  i,
  number: i % 8 === 0 && i > 0 && i <= last ? i / 8 : null,
  half: i % 8 === 4,
}));

export default function App() {
  return (
    <>
      <Global />
      <Screen>
        <OfficeButton><OfficeLogo /></OfficeButton>
        <TitleBar>
          <TitleLeft>
            <QuickAccess><SaveIcon /><Gap $s={1} /><UndoIcon /><Arrow c="#3d5373" /><RedoIcon /></QuickAccess>
            <svg width="7" height="6" viewBox="0 0 7 6"><path d="M0 .5H7" stroke="#d5e3f2" /><path d="M.5 2.5H6.5L3.5 5.5Z" fill="none" stroke="#d5e3f2" /></svg>
          </TitleLeft>
          <TitleText><Text w={198} color="#0c1a2c">nadirah_proof_read  -  Microsoft Word</Text></TitleText>
          <WindowButtons>
            <WindowButton $w={27}><svg width="13" height="6" viewBox="0 0 13 6"><rect x=".5" y="1.5" width="12" height="4" rx="1" fill="#fff" stroke="#4a5a6c" /></svg></WindowButton>
            <WindowButton $w={27}><svg width="13" height="13" viewBox="0 0 13 13" fill="#fff" stroke="#3c4c5e"><path d="M4 .5H12.5V9H10V3H4Z" /><path d="M.5 3.5H9.5V12.5H.5ZM3.5 6.5V9.5H6.5V6.5Z" fillRule="evenodd" /></svg></WindowButton>
            <WindowButton $w={47} $close><svg width="13" height="12" viewBox="0 0 13 12"><path d="M2.5 1.5L10.5 10M10.5 1.5L2.5 10" stroke="#4c2a28" strokeWidth="4" /><path d="M2.5 1.5L10.5 10M10.5 1.5L2.5 10" stroke="#fff" strokeWidth="2.5" /></svg></WindowButton>
          </WindowButtons>
        </TitleBar>

        <TabRow>
          <Tab $w={54} $active><Text w={30}>Home</Text></Tab>
          {tabs.map(([name, w, box]) => <Tab key={name} $w={box}><Text w={w}>{name}</Text></Tab>)}
          <HelpSlot>
            <svg width="14" height="14" viewBox="0 0 14 14"><circle cx="7" cy="7" r="6.3" fill="#2f66d0" stroke="#dce9fb" /><path d="M4.8 5.4Q5 3.4 7 3.4Q9.4 3.5 9.2 5.5Q9 6.6 7 7.6V8.6M7 9.8V11.4" stroke="#fff" strokeWidth="1.5" fill="none" /></svg>
          </HelpSlot>
        </TabRow>

        <Ribbon>
          <Group w={75} label="Clipboard" lw={50} shift={17}>
            <PasteColumn>
              <PasteIcon />
              <Blank $h={4} />
              <Text w={27} lh={14}>Paste</Text>
              <Blank $h={4} />
              <Arrow />
            </PasteColumn>
            <SmallColumn><CutIcon /><CopyIcon /><PainterIcon /></SmallColumn>
          </Group>

          <Group w={261} label="Font" lw={24} shift={18}>
            <Rows>
              <Row $gap={0}>
                <Combo $w={136}><Text w={33}>Calibri</Text><Arrow /></Combo>
                <Combo $w={43}><Text w={12}>11</Text><Arrow /></Combo>
                <Gap $s={4} />
                <Cluster $w={45}><Tool $w={22}><GrowIcon up /></Tool><Tool $w={21}><GrowIcon /></Tool></Cluster>
                <Gap $s={4} />
                <Cluster $w={23}><Tool $w={21}><EraserIcon /></Tool></Cluster>
              </Row>
              <Row>
                <Cluster $w={184}>
                  <Tool $w={22}><Glyph $size={15}>B</Glyph></Tool>
                  <Tool $w={24}><Glyph $size={15} $italic>I</Glyph></Tool>
                  <Tool $w={24}><Glyph $size={14} $under>U</Glyph></Tool>
                  <Tool $w={10}><Arrow /></Tool>
                  <Tool $w={27}><Glyph $size={12} $strike>abc</Glyph></Tool>
                  <Tool $w={21}><Glyph $size={15}>x<sub>2</sub></Glyph></Tool>
                  <Tool $w={27}><Glyph $size={15}>x<sup>2</sup></Glyph></Tool>
                  <Tool $w={18}><Glyph $size={13}>Aa</Glyph></Tool>
                  <Tool $w={9}><Arrow /></Tool>
                </Cluster>
                <Cluster $w={67}>
                  <Tool $w={20}><HighlighterIcon /></Tool><Tool $w={13}><Arrow /></Tool>
                  <Tool $w={20}><FontColorIcon /></Tool><Tool $w={11}><Arrow /></Tool>
                </Cluster>
              </Row>
            </Rows>
          </Group>

          <Group w={208} label="Paragraph" lw={53} shift={20}>
            <Rows>
              <Row>
                <Cluster $w={99}>
                  <Tool $w={22}><BulletIcon kind="dot" /></Tool><Tool $w={12}><Arrow /></Tool>
                  <Tool $w={22}><BulletIcon kind="num" /></Tool><Tool $w={12}><Arrow /></Tool>
                  <Tool $w={19}><BulletIcon kind="multi" /></Tool><Tool $w={8}><Arrow /></Tool>
                </Cluster>
                <Cluster $w={44}><Tool $w={21}><IndentIcon out /></Tool><Tool $w={21}><IndentIcon /></Tool></Cluster>
                <Cluster $w={24}><Tool $w={22}><SortIcon /></Tool></Cluster>
                <Cluster $w={23}><Tool $w={21}><Glyph $size={17}>¶</Glyph></Tool></Cluster>
              </Row>
              <Row>
                <Cluster $w={93}>
                  <Tool $w={22}><AlignIcon a="l" /></Tool><Tool $w={24}><AlignIcon a="c" /></Tool><Tool $w={23}><AlignIcon a="r" /></Tool><Tool $w={22} $on><AlignIcon a="j" /></Tool>
                </Cluster>
                <Cluster $w={31}><Tool $w={19}><SpacingIcon /></Tool><Tool $w={9}><Arrow /></Tool></Cluster>
                <Cluster $w={66}>
                  <Tool $w={21}><BucketIcon /></Tool><Tool $w={10}><Arrow /></Tool>
                  <Tool $w={23}><BorderIcon /></Tool><Tool $w={9}><Arrow /></Tool>
                </Cluster>
              </Row>
            </Rows>
          </Group>

          <Group w={361} label="Styles" lw={28} shift={20}>
            <Gallery>
              <StyleTile $w={72} $on>
                <Sample $cut={60}><Text w={66} size={13.5} font={LATO} color="#111">AaBbCcDd</Text></Sample>
                <Text w={46}>¶ Normal</Text>
              </StyleTile>
              <StyleTile $w={64} $ml={4}>
                <Sample $cut={60}><Text w={66} size={13.5} font={LATO} color="#111">AaBbCcDd</Text></Sample>
                <Text w={63}>¶ No Spaci...</Text>
              </StyleTile>
              <StyleTile $w={64} $ml={8}>
                <Sample $cut={60}><Text w={66} size={18.5} bold font={SERIF} color="#2c4a6e" lh={18}>AaBbCc</Text></Sample>
                <Text w={53}>Heading 1</Text>
              </StyleTile>
              <StyleTile $w={64} $ml={8}>
                <Sample><Text w={59} size={17} bold font={SERIF} color="#4a7ebb" lh={18}>AaBbCc</Text></Sample>
                <Text w={54}>Heading 2</Text>
              </StyleTile>
              <GalleryScroll><div><SmallTri up c="#a0a4ac" /></div><div><SmallTri c="#4f6a96" /></div><div><svg width="7" height="7" viewBox="0 0 7 7"><path d="M0 .5H7" stroke="#4f6a96" /><path d="M.5 3H6.5L3.5 6.5Z" fill="#4f6a96" /></svg></div></GalleryScroll>
            </Gallery>
            <ChangeStyles>
              <ChangeStylesIcon />
              <Blank $h={4} />
              <Text w={40} lh={13}>Change</Text>
              <Inline><Text w={30} lh={13}>Styles</Text><Arrow /></Inline>
            </ChangeStyles>
          </Group>

          <Group w={73} label="Editing" lw={36} launcher={false}>
            <EditList>
              <Inline><FindIcon /><Text w={23}>Find</Text><Arrow /></Inline>
              <Inline $gap={3}><ReplaceIcon /><Text w={40}>Replace</Text></Inline>
              <Inline><CursorIcon /><Text w={30}>Select</Text><Arrow /></Inline>
            </EditList>
          </Group>
        </Ribbon>
        <RibbonEdge />

        <Workspace>
          <MapPane>
            <MapHeader>
              <MapSelector>
                <Text w={84} color="#101010">Document Map</Text>
                <SelectorArrow><svg width="7" height="4" viewBox="0 0 7 4"><path d="M0 0H7L3.5 4Z" fill="#1b2c50" /></svg></SelectorArrow>
              </MapSelector>
              <svg width="9" height="9" viewBox="0 0 9 9"><path d="M.8 .8L8.2 8.2M8.2 .8L.8 8.2" stroke="#4c586c" strokeWidth="1.8" /></svg>
            </MapHeader>
            <MapBody>
              <MapText>
                <Text w={173} size={15.8} lh={19} font={ARIAL} color="#111">Keywords: Learning Man</Text>
                <Highlight><Text w={182} size={15.8} lh={19} font={ARIAL} color="#eef6ff">There are various types of</Text></Highlight>
              </MapText>
              <VTrack $w={16}>
                <Gap $s={6} /><UpTri /><Gap $s={6} />
                <Thumb $w={15} $h={17}><Grip v /></Thumb>
                <Gap $s={308} /><DownTri />
              </VTrack>
            </MapBody>
            <ScrollRow>
              <HTrack><Gap $s={5} /><SideTri /><Gap $s={7} /><Thumb $w={17} $h={14}><Grip /></Thumb><Gap $s={152} /><SideTri right /></HTrack>
              <Corner $w={16} />
            </ScrollRow>
          </MapPane>
          <Splitter />
          <Editor>
            <RulerRow>
              <TabSelector><span><svg width="7" height="7" viewBox="0 0 7 7"><path d="M1.2 0V5.8H7" fill="none" stroke="#1c2840" strokeWidth="2" /></svg></span></TabSelector>
              <HRuler>
                <RulerStrip>
                  {marks(57, -1, 50).map(m => (
                    <Mark key={m.i}>{m.i === 0 ? null : m.number ? <span>{m.number}</span> : <Tick $w={1} $h={m.half ? 5 : 3} />}</Mark>
                  ))}
                </RulerStrip>
                <TabStops>{Array.from({ length: 12 }, (_, i) => <div key={i} />)}</TabStops>
                <IndentMarker $x={19} $y={3}><svg width="9" height="21" viewBox="0 0 9 21" fill="#e4ecf8" stroke="#54688c"><path d="M.5 .5H8.5V2L4.5 7L.5 2Z" /><path d="M4.5 8L8.5 12.5V14H.5V12.5Z" /><rect x=".5" y="15.5" width="8" height="4" /></svg></IndentMarker>
                <IndentMarker $x={708} $y={10}><svg width="9" height="8" viewBox="0 0 9 8" fill="#d5e0f0" stroke="#54688c"><path d="M4.5 .8L8.5 5V7.5H.5V5Z" /></svg></IndentMarker>
              </HRuler>
            </RulerRow>
            <PageArea>
              <VRuler>
                <VRulerStrip>
                  {marks(26, 1).map(m => (
                    <Mark key={m.i} $vertical>{m.number ? <span>{m.number}</span> : <Tick $h={1} $w={m.half ? 5 : 3} />}</Mark>
                  ))}
                </VRulerStrip>
              </VRuler>
              <Page>
                <Frame>
                  <Wires width="692" height="344" viewBox="270 169 692 344" stroke="#14141c" strokeWidth="1.3" fill="none">
                    <path d="M598.5 226V254M408.5 254V240.5H787.5V254M405.5 296V307M598.5 296V307M787.5 296V307" />
                  </Wires>
                  <Shape $x={526} $y={182} $w={136} $h={45} $r={7} $fill="#5c1f90" $pt={9}><Text w={24} color="#efe6f8">LMS</Text></Shape>
                  <Shape $x={333} $y={254} $w={169} $h={42} $r={7} $fill="#ffff00"><Text w={108}>Learning Skills Tools</Text></Shape>
                  <Shape $x={516} $y={254} $w={174} $h={42} $r={7} $fill="#00c000"><Text w={117} color="#062c06">Communication Tools</Text></Shape>
                  <Shape $x={724} $y={254} $w={152} $h={42} $r={7} $fill="#00a0f0"><Text w={97}>Productivity Tools</Text></Shape>

                  <Shape $x={327} $y={306} $w={170} $h={196} $r={30} $fill="#ff50ff" $pl={18} $pt={13}>
                    <Text w={51}><b>Function</b>:</Text>
                    <Text w={115}>Creates activities and</Text>
                    <Text w={73}>learning tools</Text>
                    <Blank $h={16} />
                    <Text w={51}><b>Example</b>:</Text>
                    <Text w={116}>Quizzes, presentation</Text>
                    <Text w={121}>tools, and assignments</Text>
                  </Shape>
                  <Shape $x={510} $y={307} $w={175} $h={195} $r={30} $fill="#c0e8ff" $pl={18} $pt={14}>
                    <Text w={51}><b>Function</b>:</Text>
                    <Text w={96}>Allows interaction</Text>
                    <Text w={122}>between lecturers and</Text>
                    <Text w={47}>students</Text>
                    <Blank $h={17} />
                    <Text w={50}><b>Example</b>:</Text>
                    <Text w={111}>Announcements and</Text>
                    <Text w={61}>discussions</Text>
                  </Shape>
                  <Shape $x={697} $y={307} $w={206} $h={195} $r={32} $fill="#ffc050" $pl={20} $pt={15}>
                    <Text w={122}>Including management</Text>
                    <Text w={43}>systems</Text>
                    <Blank $h={1} />
                    <ListRow><Text w={6}>i.</Text><Text w={62}>Documents</Text></ListRow>
                    <ListRow><i /><Text w={130}><b>Example</b>: uploading and</Text></ListRow>
                    <ListRow><i /><Text w={133}>downloading documents</Text></ListRow>
                    <ListRow><Text w={10}>ii.</Text><Text w={136}>Storing students’ records</Text></ListRow>
                    <ListRow><i /><Text w={116}><b>Example</b>: Marks from</Text></ListRow>
                    <ListRow><i /><Text w={135}>quizzes, assignments and</Text></ListRow>
                    <ListRow><i /><Text w={35}>exams</Text></ListRow>
                    <ListRow><Text w={13}>iii.</Text><Text w={43}>Surveys</Text></ListRow>
                  </Shape>
                </Frame>
                <Caption><Text w={71} bold size={13} lh={18} font={LATO} color="#111">Diagram 1</Text><Text w={62} size={13} lh={18} font={LATO} color="#111">LMS tools</Text></Caption>
              </Page>
            </PageArea>
            <ScrollRow>
              <HTrack><Gap $s={5} /><SideTri /><Gap $s={90} /><Thumb $w={607} $h={15}><Grip /></Thumb><Gap $s={69} /><SideTri right /></HTrack>
            </ScrollRow>
          </Editor>
          <RightRail>
            <RulerToggle><svg width="12" height="12" viewBox="0 0 12 12" fill="#fff" stroke="#3f4b60"><path d="M.5 1.5H8.5V5H4.5V9.5H.5Z" /><path d="M3.5 4.5L6 3L11.5 8L9.5 11.5L3.5 7.5Z" /></svg></RulerToggle>
            <VTrack $w={16}><Gap $s={6} /><UpTri /><Gap $s={63} /><Thumb $w={15} $h={8} /><Gap $s={218} /><DownTri /><Gap $s={6} /></VTrack>
            <BrowseButtons><DoubleTri up /><svg width="8" height="8" viewBox="0 0 8 8"><circle cx="4" cy="4" r="3.3" fill="#b4bfd2" stroke="#1c2434" /></svg><DoubleTri /></BrowseButtons>
          </RightRail>
        </Workspace>

        <StatusBar>
          <StatusCell $w={83} $pl={8}><Text w={67}>Page: 4 of 15</Text></StatusCell>
          <StatusCell $w={85} $pl={9}><Text w={67}>Words: 4,664</Text></StatusCell>
          <StatusCell $w={34} $pl={8}><ProofIcon /></StatusCell>
          <StatusRight>
            <Views>{[0, 1, 2, 3, 4].map(n => <View key={n} $on={n === 0}><ViewIcon n={n} /></View>)}</Views>
            <Gap $s={8} />
            <Text w={28}>110%</Text>
            <Gap $s={9} />
            <Knob><svg width="7" height="7" viewBox="0 0 7 7"><path d="M0 3.5H7" stroke="#3d506f" strokeWidth="1.6" /></svg></Knob>
            <SliderLine><svg width="9" height="13" viewBox="0 0 9 13"><path d="M.5 .5H8.5V8L4.5 12.3L.5 8Z" fill="#dde8f6" stroke="#44628f" /><path d="M4.5 3V8" stroke="#7c94b8" /></svg></SliderLine>
            <Knob><svg width="7" height="7" viewBox="0 0 7 7"><path d="M0 3.5H7M3.5 0V7" stroke="#3d506f" strokeWidth="1.6" /></svg></Knob>
          </StatusRight>
        </StatusBar>

        <Taskbar>
          <TaskItem $w={38} $ml={8}><StartOrb /></TaskItem>
          <TaskItem $w={34} $ml={27}><IeIcon /></TaskItem>
          <TaskItem $w={58} $ml={15} $run><FolderIcon /></TaskItem>
          <TaskItem $w={58} $ml={4} $run><PlayerIcon /></TaskItem>
          <TaskItem $w={30} $ml={18}><ChromeIcon /></TaskItem>
          <TaskItem $w={31} $ml={31}><FirefoxIcon /></TaskItem>
          <TaskItem $w={29} $ml={33}><AdobeIcon /></TaskItem>
          <TaskItem $w={54} $ml={18} $active><WordIcon /></TaskItem>
          <StackEdge />
          <TaskItem $w={32} $ml={17}><MendeleyIcon /></TaskItem>
          <TaskItem $w={59} $ml={16} $run><AvastIcon /></TaskItem>
          <Tray>
            <svg width="8" height="5" viewBox="0 0 8 5"><path d="M0 5H8L4 0Z" fill="#f2f2f2" /></svg>
            <Gap $s={11} />
            <PowerIcon />
            <Gap $s={9} />
            <SignalIcon />
            <Gap $s={13} />
            <Clock><Text w={49} lh={17}>11:40 PM</Text><Text w={46} lh={17}>3/9/2016</Text></Clock>
            <ShowDesktop />
          </Tray>
        </Taskbar>
      </Screen>
    </>
  );
}
